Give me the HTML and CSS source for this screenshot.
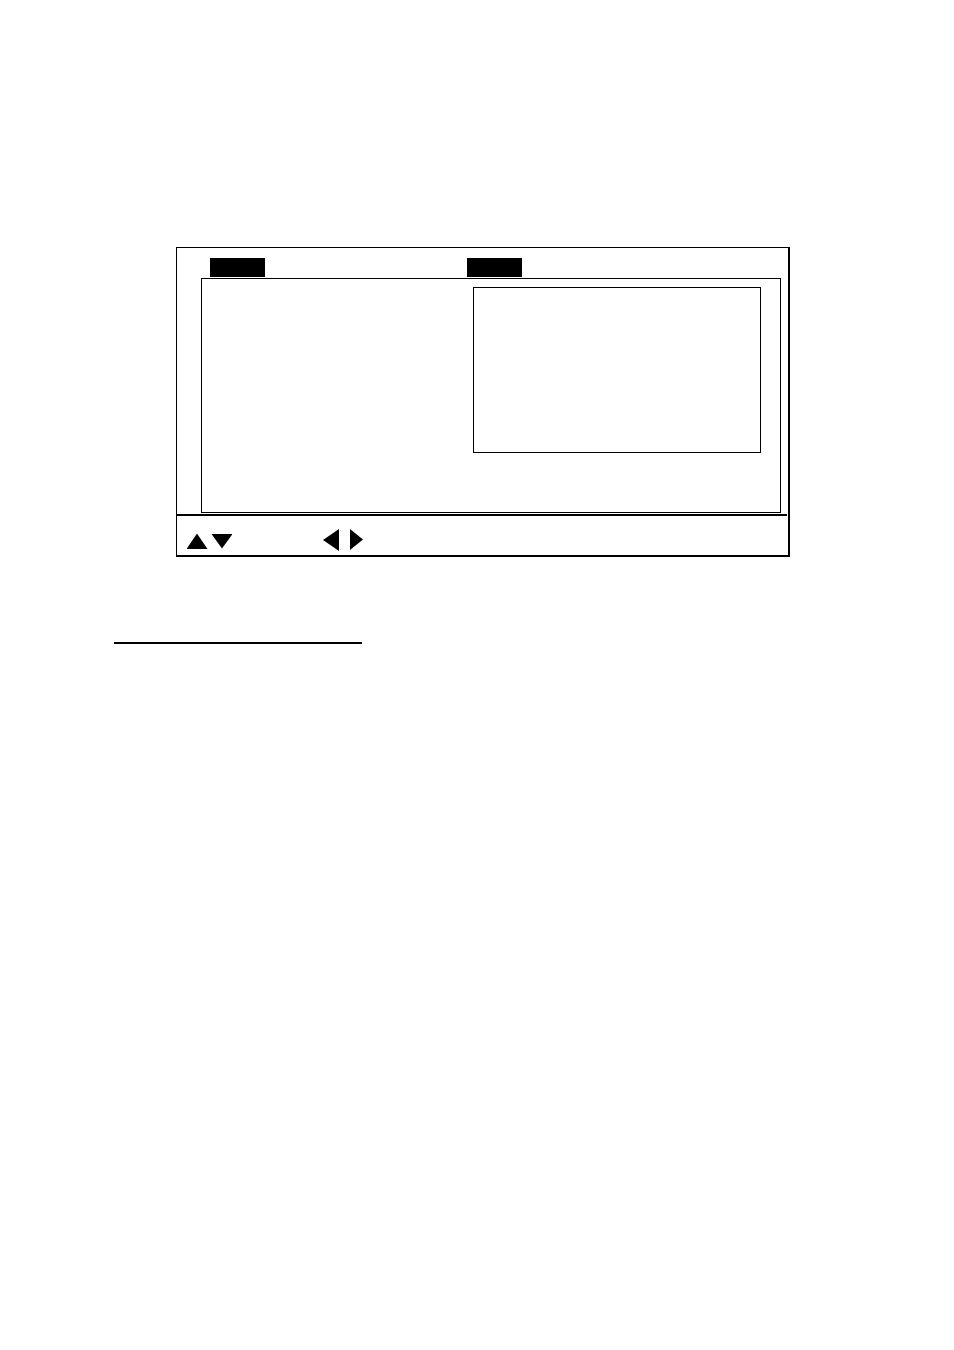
FILE: index.html
```html
<!DOCTYPE html>
<html lang="en">
<head>
  <meta charset="UTF-8" />
  <meta name="viewport" content="width=device-width, initial-scale=1" />
  <title>Menu screen</title>
  <link rel="stylesheet" href="styles.css">
</head>
<body>
  <main>
    <section class="screen">
      <div class="tabs">
        <span class="tab"></span>
        <span class="tab"></span>
      </div>

      <div class="panel">
        <div class="submenu"></div>
      </div>

      <div class="keys">
        <!-- up / down -->
        <svg width="45" height="22" viewBox="0 0 45 22" aria-hidden="true">
          <path d="M10 4.5 L20.5 20 H-0.5 Z" />
          <path d="M24.5 5 H45.5 L35 19.5 Z" />
        </svg>
        <!-- left / right -->
        <svg width="40" height="22" viewBox="0 0 40 22" aria-hidden="true">
          <path d="M16 0 V22 L0 11 Z" />
          <path d="M27 0 V21 L40 10.5 Z" />
        </svg>
      </div>
    </section>

    <hr class="rule">
  </main>
</body>
</html>
```
FILE: styles.css
```css
body {
  font-family: "Liberation Sans", Arial, sans-serif;
  background-color: #fff;
  color: #000;
  margin: 0;
}
main {
  padding: 247px 114px 0;
}
.screen {
  margin: 0 50px 0 62px;
  border: 1px solid #000;
  border-right-width: 2px;
  border-bottom-width: 2px;
}
.tabs {
  display: flex;
  gap: 202px;
  padding: 10px 33px 1px;
}
.tab {
  width: 55px;
  height: 19px;
  background-color: #000;
}
.panel {
  display: flex;
  justify-content: flex-end;
  margin: 0 7px 1px 24px;
  padding: 8px 19px 59px;
  border: 1px solid #000;
}
.submenu {
  box-sizing: border-box;
  width: 288px;
  height: 166px;
  border: 1px solid #000;
}
.keys {
  display: flex;
  gap: 91px;
  margin-right: 1px;
  padding: 13px 10px 4px;
  border-top: 2px solid #000;
}
.rule {
  width: 248px;
  margin: 85px 0 0;
  border: 0;
  border-top: 2px solid #000;
}
```
